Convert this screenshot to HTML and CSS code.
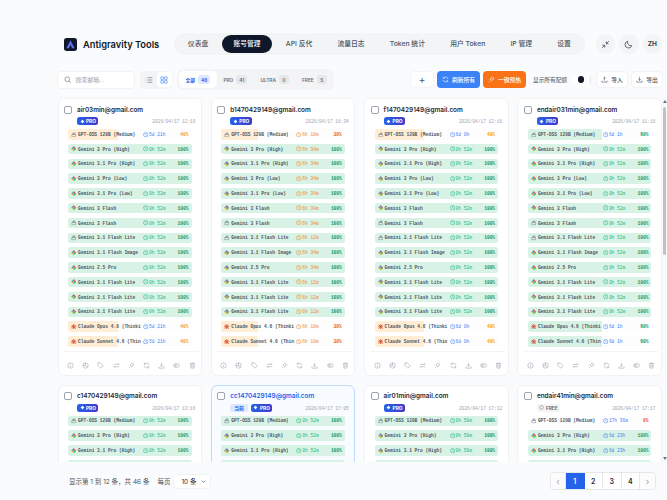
FILE: index.html
```html
<!DOCTYPE html>
<html lang="zh">
<head>
    <meta charset="UTF-8">
    <title>Antigravity Tools</title>
    <link rel="stylesheet" href="styles.css">
</head>
<body>
    <svg class="defs" aria-hidden="true">
        <symbol id="g" viewBox="0 0 10 10">
            <polygon points="5,0 5,5 0,5 2.8,2.8" fill="#2f7cf6"/>
            <polygon points="5,0 5,5 10,5 7.2,2.8" fill="#ef4444"/>
            <polygon points="10,5 5,5 5,10 7.2,7.2" fill="#22c55e"/>
            <polygon points="0,5 5,5 5,10 2.8,7.2" fill="#f5a90b"/>
        </symbol>
        <symbol id="o" viewBox="0 0 10 10">
            <path d="M1.5 4.5h7v4.2h-7zM3 4.5V3a1 1 0 0 1 2 0v1.5M5 4.5V2.2a1 1 0 0 1 2 0v2.3" fill="none" stroke="#6b7280" stroke-width=".9"/>
        </symbol>
        <symbol id="c" viewBox="0 0 10 10">
            <path d="M5 .8v8.4M.8 5h8.4M2 2l6 6M8 2l-6 6" stroke="#d9613f" stroke-width="1.8" stroke-linecap="round"/>
        </symbol>
        <symbol id="t" viewBox="0 0 10 10">
            <circle cx="5" cy="5" r="4" fill="none" stroke="currentColor" stroke-width="1"/>
            <path d="M5 2.8V5l1.6 1" fill="none" stroke="currentColor" stroke-width="1"/>
        </symbol>
        <symbol id="d" viewBox="0 0 10 10">
            <path d="M5 1l1.3 2.7L9 5 6.3 6.3 5 9 3.7 6.3 1 5l2.7-1.3z" fill="#fff"/>
            <circle cx="5" cy="5" r="2.4" fill="#fff"/>
        </symbol>
        <symbol id="a-info" viewBox="0 0 12 12"><circle cx="6" cy="6" r="4.6"/><path d="M6 5.5v3M6 3.4v.8"/></symbol>
        <symbol id="a-chart" viewBox="0 0 12 12"><circle cx="6" cy="6" r="4.6"/><path d="M6 1.4V6l3.4 3M6 6H1.4"/></symbol>
        <symbol id="a-tag" viewBox="0 0 12 12"><path d="M1.5 1.5h4.2l5 5-4.2 4.2-5-5z"/><path d="M3.8 3.8h.1"/></symbol>
        <symbol id="a-swap" viewBox="0 0 12 12"><path d="M1.5 4h9L8.5 2M10.5 8h-9l2 2"/></symbol>
        <symbol id="a-bolt" viewBox="0 0 12 12"><path d="M7 1.5l3.5 3-3 1-1 3-3-3.5zM3.5 8.5l-2 2M2 5.5l-.6.6M6.5 10l-.6.6"/></symbol>
        <symbol id="a-sync" viewBox="0 0 12 12"><path d="M10.3 5.5A4.4 4.4 0 0 0 2.4 3.6M1.7 6.5a4.4 4.4 0 0 0 7.9 1.9M2.2 1.5v2.4h2.4M9.8 10.5V8.1H7.4"/></symbol>
        <symbol id="a-down" viewBox="0 0 12 12"><path d="M6 1.5v6M3.8 5.4L6 7.6l2.2-2.2M1.5 8v2.5h9V8"/></symbol>
        <symbol id="a-eye" viewBox="0 0 12 12"><rect x="1.2" y="3" width="9.6" height="6" rx="3"/><circle cx="4.5" cy="6" r="1.6"/></symbol>
        <symbol id="a-trash" viewBox="0 0 12 12"><path d="M1.8 3h8.4M4.5 3V1.6h3V3M2.8 3l.5 7.4h5.4L9.2 3M5 5v3.4M7 5v3.4"/></symbol>
        <symbol id="a-up" viewBox="0 0 12 12"><path d="M6 8V2M3.8 4.2L6 2l2.2 2.2M1.5 8v2.5h9V8"/></symbol>
    </svg>

    <div class="page">
        <header class="header-bar">
            <div class="brand">
                <svg class="logo" viewBox="0 0 14 14">
                    <rect width="14" height="14" rx="3" fill="#0f172a"/>
                    <polygon points="7,2.5 11.5,11 8.8,11 7,7.6 5.2,11 2.5,11" fill="#5b6ee8"/>
                </svg>
                <span class="brand-name">Antigravity Tools</span>
            </div>
            <nav class="nav-pill">
                <a>仪表盘</a>
                <a class="active">账号管理</a>
                <a>API 反代</a>
                <a>流量日志</a>
                <a>Token 统计</a>
                <a>用户 Token</a>
                <a>IP 管理</a>
                <a>设置</a>
            </nav>
            <div class="circle-btn">
                <svg viewBox="0 0 12 12"><path d="M1.5 10.5L5 7M2 7h3v3M10.5 1.5L7 5M10 5H7V2"/></svg>
            </div>
            <div class="circle-btn">
                <svg viewBox="0 0 12 12"><path d="M5 1.6a4.6 4.6 0 1 0 5.4 5.8A4.4 4.4 0 0 1 5 1.6z"/></svg>
            </div>
            <div class="circle-btn lang">ZH</div>
        </header>

        <div class="toolbar">
            <div class="search">
                <svg viewBox="0 0 12 12"><circle cx="5.2" cy="5.2" r="3.8"/><path d="M8 8l3 3"/></svg>
                <span>搜索邮箱...</span>
            </div>
            <div class="view-toggle">
                <span class="view-btn">
                    <svg viewBox="0 0 12 12"><path d="M1 2.5h1M4 2.5h7M1 6h1M4 6h7M1 9.5h1M4 9.5h7"/></svg>
                </span>
                <span class="view-btn on">
                    <svg viewBox="0 0 12 12"><rect x="1.2" y="1.2" width="4" height="4" rx="1"/><rect x="6.8" y="1.2" width="4" height="4" rx="1"/><rect x="1.2" y="6.8" width="4" height="4" rx="1"/><rect x="6.8" y="6.8" width="4" height="4" rx="1"/></svg>
                </span>
            </div>
            <div class="filter-tabs">
                <span class="tab on">全部 <i>46</i></span>
                <span class="tab">PRO <i>41</i></span>
                <span class="tab">ULTRA <i>0</i></span>
                <span class="tab">FREE <i>5</i></span>
            </div>
            <div class="add-btn">+</div>
            <div class="act-btn blue">
                <svg viewBox="0 0 12 12"><use href="#a-sync"/></svg>刷新所有
            </div>
            <div class="act-btn orange">
                <svg viewBox="0 0 12 12"><use href="#a-bolt"/></svg>一键预热
            </div>
            <span class="quota-label">显示所有配额</span>
            <span class="switch"></span>
            <span class="tool-sep"></span>
            <div class="plain-btn">
                <svg viewBox="0 0 12 12"><use href="#a-up"/></svg>导入
            </div>
            <div class="plain-btn">
                <svg viewBox="0 0 12 12"><use href="#a-down"/></svg>导出
            </div>
        </div>

        <div class="list-wrap">
            <div class="card-grid">

                <div class="card">
                    <div class="card-head"><span class="check"></span><span class="email">air03min@gmail.com</span></div>
                    <div class="card-meta"><span class="badge pro"><svg><use href="#d"/></svg>PRO</span><time>2026/04/17 12:16</time></div>
                    <div class="q blue p40"><svg><use href="#o"/></svg><span>GPT-OSS 120B (Medium)</span><svg><use href="#t"/></svg><em>5d 21h</em><b>40%</b></div>
                    <div class="q"><svg><use href="#g"/></svg><span>Gemini 3 Pro (High)</span><svg><use href="#t"/></svg><em>0h 52m</em><b>100%</b></div>
                    <div class="q"><svg><use href="#g"/></svg><span>Gemini 3.1 Pro (High)</span><svg><use href="#t"/></svg><em>0h 52m</em><b>100%</b></div>
                    <div class="q"><svg><use href="#g"/></svg><span>Gemini 3 Pro (Low)</span><svg><use href="#t"/></svg><em>0h 52m</em><b>100%</b></div>
                    <div class="q"><svg><use href="#g"/></svg><span>Gemini 3.1 Pro (Low)</span><svg><use href="#t"/></svg><em>0h 52m</em><b>100%</b></div>
                    <div class="q"><svg><use href="#g"/></svg><span>Gemini 3 Flash</span><svg><use href="#t"/></svg><em>0h 52m</em><b>100%</b></div>
                    <div class="q"><svg><use href="#o"/></svg><span>Gemini 3 Flash</span><svg><use href="#t"/></svg><em>0h 52m</em><b>100%</b></div>
                    <div class="q"><svg><use href="#o"/></svg><span>Gemini 3.1 Flash Lite</span><svg><use href="#t"/></svg><em>0h 52m</em><b>100%</b></div>
                    <div class="q"><svg><use href="#g"/></svg><span>Gemini 3.1 Flash Image</span><svg><use href="#t"/></svg><em>0h 52m</em><b>100%</b></div>
                    <div class="q"><svg><use href="#g"/></svg><span>Gemini 2.5 Pro</span><svg><use href="#t"/></svg><em>0h 52m</em><b>100%</b></div>
                    <div class="q"><svg><use href="#g"/></svg><span>Gemini 3.1 Flash Lite</span><svg><use href="#t"/></svg><em>0h 52m</em><b>100%</b></div>
                    <div class="q"><svg><use href="#g"/></svg><span>Gemini 3.1 Flash Lite</span><svg><use href="#t"/></svg><em>0h 52m</em><b>100%</b></div>
                    <div class="q"><svg><use href="#g"/></svg><span>Gemini 3.1 Flash Lite</span><svg><use href="#t"/></svg><em>0h 52m</em><b>100%</b></div>
                    <div class="q blue p40"><svg><use href="#c"/></svg><span>Claude Opus 4.6 (Thinki</span><svg><use href="#t"/></svg><em>5d 21h</em><b>40%</b></div>
                    <div class="q blue p40"><svg><use href="#c"/></svg><span>Claude Sonnet 4.6 (Thin</span><svg><use href="#t"/></svg><em>5d 21h</em><b>40%</b></div>
                    <div class="card-actions"><svg><use href="#a-info"/></svg><svg><use href="#a-chart"/></svg><svg><use href="#a-tag"/></svg><svg><use href="#a-swap"/></svg><svg><use href="#a-bolt"/></svg><svg><use href="#a-sync"/></svg><svg><use href="#a-down"/></svg><svg><use href="#a-eye"/></svg><svg><use href="#a-trash"/></svg></div>
                </div>

                <div class="card">
                    <div class="card-head"><span class="check"></span><span class="email">b1470429149@gmail.com</span></div>
                    <div class="card-meta"><span class="badge pro"><svg><use href="#d"/></svg>PRO</span><time>2026/04/17 16:34</time></div>
                    <div class="q amber p30"><svg><use href="#o"/></svg><span>GPT-OSS 120B (Medium)</span><svg><use href="#t"/></svg><em>6h 10m</em><b>30%</b></div>
                    <div class="q amber full"><svg><use href="#g"/></svg><span>Gemini 3 Pro (High)</span><svg><use href="#t"/></svg><em>6h 34m</em><b>100%</b></div>
                    <div class="q amber full"><svg><use href="#g"/></svg><span>Gemini 3.1 Pro (High)</span><svg><use href="#t"/></svg><em>6h 34m</em><b>100%</b></div>
                    <div class="q amber full"><svg><use href="#g"/></svg><span>Gemini 3 Pro (Low)</span><svg><use href="#t"/></svg><em>6h 34m</em><b>100%</b></div>
                    <div class="q amber full"><svg><use href="#g"/></svg><span>Gemini 3.1 Pro (Low)</span><svg><use href="#t"/></svg><em>6h 34m</em><b>100%</b></div>
                    <div class="q amber full"><svg><use href="#g"/></svg><span>Gemini 3 Flash</span><svg><use href="#t"/></svg><em>6h 34m</em><b>100%</b></div>
                    <div class="q amber full"><svg><use href="#o"/></svg><span>Gemini 3 Flash</span><svg><use href="#t"/></svg><em>6h 34m</em><b>100%</b></div>
                    <div class="q amber full"><svg><use href="#o"/></svg><span>Gemini 3.1 Flash Lite</span><svg><use href="#t"/></svg><em>6h 12m</em><b>100%</b></div>
                    <div class="q amber full"><svg><use href="#g"/></svg><span>Gemini 3.1 Flash Image</span><svg><use href="#t"/></svg><em>6h 34m</em><b>100%</b></div>
                    <div class="q amber full"><svg><use href="#g"/></svg><span>Gemini 2.5 Pro</span><svg><use href="#t"/></svg><em>6h 34m</em><b>100%</b></div>
                    <div class="q amber full"><svg><use href="#g"/></svg><span>Gemini 3.1 Flash Lite</span><svg><use href="#t"/></svg><em>6h 12m</em><b>100%</b></div>
                    <div class="q amber full"><svg><use href="#g"/></svg><span>Gemini 3.1 Flash Lite</span><svg><use href="#t"/></svg><em>6h 12m</em><b>100%</b></div>
                    <div class="q amber full"><svg><use href="#g"/></svg><span>Gemini 3.1 Flash Lite</span><svg><use href="#t"/></svg><em>6h 12m</em><b>100%</b></div>
                    <div class="q amber p30"><svg><use href="#c"/></svg><span>Claude Opus 4.6 (Thinki</span><svg><use href="#t"/></svg><em>6h 10m</em><b>30%</b></div>
                    <div class="q amber p30"><svg><use href="#c"/></svg><span>Claude Sonnet 4.6 (Thin</span><svg><use href="#t"/></svg><em>6h 10m</em><b>30%</b></div>
                    <div class="card-actions"><svg><use href="#a-info"/></svg><svg><use href="#a-chart"/></svg><svg><use href="#a-tag"/></svg><svg><use href="#a-swap"/></svg><svg><use href="#a-bolt"/></svg><svg><use href="#a-sync"/></svg><svg><use href="#a-down"/></svg><svg><use href="#a-eye"/></svg><svg><use href="#a-trash"/></svg></div>
                </div>

                <div class="card">
                    <div class="card-head"><span class="check"></span><span class="email">f1470429149@gmail.com</span></div>
                    <div class="card-meta"><span class="badge pro"><svg><use href="#d"/></svg>PRO</span><time>2026/04/17 12:16</time></div>
                    <div class="q blue p40"><svg><use href="#o"/></svg><span>GPT-OSS 120B (Medium)</span><svg><use href="#t"/></svg><em>6d 0h</em><b>40%</b></div>
                    <div class="q"><svg><use href="#g"/></svg><span>Gemini 3 Pro (High)</span><svg><use href="#t"/></svg><em>0h 52m</em><b>100%</b></div>
                    <div class="q"><svg><use href="#g"/></svg><span>Gemini 3.1 Pro (High)</span><svg><use href="#t"/></svg><em>0h 52m</em><b>100%</b></div>
                    <div class="q"><svg><use href="#g"/></svg><span>Gemini 3 Pro (Low)</span><svg><use href="#t"/></svg><em>0h 52m</em><b>100%</b></div>
                    <div class="q"><svg><use href="#g"/></svg><span>Gemini 3.1 Pro (Low)</span><svg><use href="#t"/></svg><em>0h 52m</em><b>100%</b></div>
                    <div class="q"><svg><use href="#g"/></svg><span>Gemini 3 Flash</span><svg><use href="#t"/></svg><em>0h 52m</em><b>100%</b></div>
                    <div class="q"><svg><use href="#o"/></svg><span>Gemini 3 Flash</span><svg><use href="#t"/></svg><em>0h 52m</em><b>100%</b></div>
                    <div class="q"><svg><use href="#o"/></svg><span>Gemini 3.1 Flash Lite</span><svg><use href="#t"/></svg><em>0h 52m</em><b>100%</b></div>
                    <div class="q"><svg><use href="#g"/></svg><span>Gemini 3.1 Flash Image</span><svg><use href="#t"/></svg><em>0h 52m</em><b>100%</b></div>
                    <div class="q"><svg><use href="#g"/></svg><span>Gemini 2.5 Pro</span><svg><use href="#t"/></svg><em>0h 52m</em><b>100%</b></div>
                    <div class="q"><svg><use href="#g"/></svg><span>Gemini 3.1 Flash Lite</span><svg><use href="#t"/></svg><em>0h 52m</em><b>100%</b></div>
                    <div class="q"><svg><use href="#g"/></svg><span>Gemini 3.1 Flash Lite</span><svg><use href="#t"/></svg><em>0h 52m</em><b>100%</b></div>
                    <div class="q"><svg><use href="#g"/></svg><span>Gemini 3.1 Flash Lite</span><svg><use href="#t"/></svg><em>0h 52m</em><b>100%</b></div>
                    <div class="q blue p40"><svg><use href="#c"/></svg><span>Claude Opus 4.6 (Thinki</span><svg><use href="#t"/></svg><em>6d 0h</em><b>40%</b></div>
                    <div class="q blue p40"><svg><use href="#c"/></svg><span>Claude Sonnet 4.6 (Thin</span><svg><use href="#t"/></svg><em>6d 0h</em><b>40%</b></div>
                    <div class="card-actions"><svg><use href="#a-info"/></svg><svg><use href="#a-chart"/></svg><svg><use href="#a-tag"/></svg><svg><use href="#a-swap"/></svg><svg><use href="#a-bolt"/></svg><svg><use href="#a-sync"/></svg><svg><use href="#a-down"/></svg><svg><use href="#a-eye"/></svg><svg><use href="#a-trash"/></svg></div>
                </div>

                <div class="card">
                    <div class="card-head"><span class="check"></span><span class="email">endair031min@gmail.com</span></div>
                    <div class="card-meta"><span class="badge pro"><svg><use href="#d"/></svg>PRO</span><time>2026/04/17 11:16</time></div>
                    <div class="q blue p60"><svg><use href="#o"/></svg><span>GPT-OSS 120B (Medium)</span><svg><use href="#t"/></svg><em>6d 1h</em><b>60%</b></div>
                    <div class="q"><svg><use href="#g"/></svg><span>Gemini 3 Pro (High)</span><svg><use href="#t"/></svg><em>0h 52m</em><b>100%</b></div>
                    <div class="q"><svg><use href="#g"/></svg><span>Gemini 3.1 Pro (High)</span><svg><use href="#t"/></svg><em>0h 52m</em><b>100%</b></div>
                    <div class="q"><svg><use href="#g"/></svg><span>Gemini 3 Pro (Low)</span><svg><use href="#t"/></svg><em>0h 52m</em><b>100%</b></div>
                    <div class="q"><svg><use href="#g"/></svg><span>Gemini 3.1 Pro (Low)</span><svg><use href="#t"/></svg><em>0h 52m</em><b>100%</b></div>
                    <div class="q"><svg><use href="#g"/></svg><span>Gemini 3 Flash</span><svg><use href="#t"/></svg><em>0h 52m</em><b>100%</b></div>
                    <div class="q"><svg><use href="#o"/></svg><span>Gemini 3 Flash</span><svg><use href="#t"/></svg><em>0h 52m</em><b>100%</b></div>
                    <div class="q"><svg><use href="#o"/></svg><span>Gemini 3.1 Flash Lite</span><svg><use href="#t"/></svg><em>0h 52m</em><b>100%</b></div>
                    <div class="q"><svg><use href="#g"/></svg><span>Gemini 3.1 Flash Image</span><svg><use href="#t"/></svg><em>0h 52m</em><b>100%</b></div>
                    <div class="q"><svg><use href="#g"/></svg><span>Gemini 2.5 Pro</span><svg><use href="#t"/></svg><em>0h 52m</em><b>100%</b></div>
                    <div class="q"><svg><use href="#g"/></svg><span>Gemini 3.1 Flash Lite</span><svg><use href="#t"/></svg><em>0h 52m</em><b>100%</b></div>
                    <div class="q"><svg><use href="#g"/></svg><span>Gemini 3.1 Flash Lite</span><svg><use href="#t"/></svg><em>0h 52m</em><b>100%</b></div>
                    <div class="q"><svg><use href="#g"/></svg><span>Gemini 3.1 Flash Lite</span><svg><use href="#t"/></svg><em>0h 52m</em><b>100%</b></div>
                    <div class="q blue p60"><svg><use href="#c"/></svg><span>Claude Opus 4.6 (Thinki</span><svg><use href="#t"/></svg><em>6d 1h</em><b>60%</b></div>
                    <div class="q blue p60"><svg><use href="#c"/></svg><span>Claude Sonnet 4.6 (Thin</span><svg><use href="#t"/></svg><em>6d 1h</em><b>60%</b></div>
                    <div class="card-actions"><svg><use href="#a-info"/></svg><svg><use href="#a-chart"/></svg><svg><use href="#a-tag"/></svg><svg><use href="#a-swap"/></svg><svg><use href="#a-bolt"/></svg><svg><use href="#a-sync"/></svg><svg><use href="#a-down"/></svg><svg><use href="#a-eye"/></svg><svg><use href="#a-trash"/></svg></div>
                </div>

                <div class="card">
                    <div class="card-head"><span class="check"></span><span class="email">c1470429149@gmail.com</span></div>
                    <div class="card-meta"><span class="badge pro"><svg><use href="#d"/></svg>PRO</span><time>2026/04/17 13:16</time></div>
                    <div class="q"><svg><use href="#o"/></svg><span>GPT-OSS 120B (Medium)</span><svg><use href="#t"/></svg><em>0h 52m</em><b>100%</b></div>
                    <div class="q"><svg><use href="#g"/></svg><span>Gemini 3 Pro (High)</span><svg><use href="#t"/></svg><em>0h 52m</em><b>100%</b></div>
                    <div class="q"><svg><use href="#g"/></svg><span>Gemini 3.1 Pro (High)</span><svg><use href="#t"/></svg><em>0h 52m</em><b>100%</b></div>
                    <div class="q clip"></div>
                </div>

                <div class="card current">
                    <div class="card-head"><span class="check"></span><span class="email">cc1470429149@gmail.com</span></div>
                    <div class="card-meta"><span class="badge now">当前</span><span class="badge pro"><svg><use href="#d"/></svg>PRO</span><time>2026/04/17 17:05</time></div>
                    <div class="q"><svg><use href="#o"/></svg><span>GPT-OSS 120B (Medium)</span><svg><use href="#t"/></svg><em>0h 52m</em><b>100%</b></div>
                    <div class="q"><svg><use href="#g"/></svg><span>Gemini 3 Pro (High)</span><svg><use href="#t"/></svg><em>0h 52m</em><b>100%</b></div>
                    <div class="q"><svg><use href="#g"/></svg><span>Gemini 3.1 Pro (High)</span><svg><use href="#t"/></svg><em>0h 52m</em><b>100%</b></div>
                    <div class="q clip"></div>
                </div>

                <div class="card">
                    <div class="card-head"><span class="check"></span><span class="email">air01min@gmail.com</span></div>
                    <div class="card-meta"><span class="badge pro"><svg><use href="#d"/></svg>PRO</span><time>2026/04/17 17:12</time></div>
                    <div class="q"><svg><use href="#o"/></svg><span>GPT-OSS 120B (Medium)</span><svg><use href="#t"/></svg><em>0h 50m</em><b>100%</b></div>
                    <div class="q"><svg><use href="#g"/></svg><span>Gemini 3 Pro (High)</span><svg><use href="#t"/></svg><em>0h 50m</em><b>100%</b></div>
                    <div class="q"><svg><use href="#g"/></svg><span>Gemini 3.1 Pro (High)</span><svg><use href="#t"/></svg><em>0h 50m</em><b>100%</b></div>
                    <div class="q clip"></div>
                </div>

                <div class="card">
                    <div class="card-head"><span class="check"></span><span class="email">endair41min@gmail.com</span></div>
                    <div class="card-meta"><span class="badge free"><svg viewBox="0 0 10 10"><circle cx="5" cy="5" r="3.6" fill="none" stroke="#6b7280" stroke-width="1"/></svg>FREE</span><time>2026/04/17 17:17</time></div>
                    <div class="q empty"><svg><use href="#o"/></svg><span>GPT-OSS 120B (Medium)</span><svg><use href="#t"/></svg><em>17h 36m</em><b>0%</b></div>
                    <div class="q blue full"><svg><use href="#g"/></svg><span>Gemini 3 Pro (High)</span><svg><use href="#t"/></svg><em>6d 23h</em><b>100%</b></div>
                    <div class="q blue full"><svg><use href="#g"/></svg><span>Gemini 3.1 Pro (High)</span><svg><use href="#t"/></svg><em>6d 23h</em><b>100%</b></div>
                    <div class="q clip"></div>
                </div>

            </div>
            <div class="scrollbar">
                <span class="arrow-up"></span>
                <div class="thumb-track"><div class="thumb"></div></div>
                <span class="arrow-down"></span>
            </div>
        </div>

        <footer class="footer-bar">
            <span class="page-info">显示第 1 到 12 条，共 46 条</span>
            <span class="per-page">每页</span>
            <div class="size-select">10 条
                <svg viewBox="0 0 12 12"><path d="M3 4.5L6 7.5l3-3"/></svg>
            </div>
            <div class="pager">
                <span class="pg side">&#8249;</span>
                <span class="pg on">1</span>
                <span class="pg">2</span>
                <span class="pg">3</span>
                <span class="pg">4</span>
                <span class="pg side">&#8250;</span>
            </div>
        </footer>
    </div>
</body>
</html>
```

FILE: styles.css
```css
* {
    box-sizing: border-box;
}
html, body {
    height: 100%;
}
body {
    margin: 0;
    background: #fafbfc;
    color: #1f2937;
    font-family: Inter, "Noto Sans CJK SC", sans-serif;
    overflow: hidden;
}
.defs {
    display: none;
}
.page {
    width: 667px;
    height: 500px;
    padding: 33px 0 0 57px;
    display: flex;
    flex-direction: column;
    overflow: hidden;
}

/* header */
.header-bar {
    height: 22px;
    padding: 0 5px 0 7px;
    display: flex;
    align-items: center;
    gap: 4px;
}
.brand {
    display: flex;
    align-items: center;
    gap: 6px;
    margin-right: auto;
}
.logo {
    width: 13px;
    height: 13px;
}
.brand-name {
    font-size: 9.3px;
    font-weight: 600;
    color: #111827;
}
.nav-pill {
    display: flex;
    gap: 2px;
    height: 22px;
    padding: 2px;
    margin-right: 7px;
    background: #f3f4f6;
    border-radius: 11px;
}
.nav-pill a {
    padding: 0 11.6px;
    font-size: 6.8px;
    font-weight: 500;
    line-height: 18px;
    color: #4b5563;
    border-radius: 9px;
    white-space: nowrap;
}
.nav-pill a.active {
    background: #0f172a;
    color: #fff;
}
.circle-btn {
    width: 19.5px;
    height: 19.5px;
    border-radius: 50%;
    background: #f3f4f6;
    display: flex;
    align-items: center;
    justify-content: center;
}
.circle-btn svg {
    width: 9px;
    height: 9px;
    fill: none;
    stroke: #374151;
    stroke-width: 1;
}
.lang {
    font-size: 6.5px;
    font-weight: 700;
    color: #374151;
}

/* toolbar */
.toolbar {
    height: 21px;
    margin-top: 14px;
    display: flex;
    align-items: center;
    flex-shrink: 0;
    width: 640px;
}
.toolbar svg {
    fill: none;
    stroke: currentColor;
    stroke-width: 1;
}
.search {
    width: 78px;
    height: 18px;
    padding-left: 6px;
    display: flex;
    align-items: center;
    gap: 4px;
    background: #fff;
    border: 1px solid #f1f2f4;
    border-radius: 4px;
    font-size: 6px;
    color: #9ca3af;
    flex-shrink: 0;
}
.search svg {
    width: 7.5px;
    height: 7.5px;
    color: #6b7280;
}
.view-toggle {
    width: 33px;
    height: 18px;
    margin-left: 5px;
    padding: 1.5px;
    display: flex;
    background: #f3f4f6;
    border-radius: 5px;
    flex-shrink: 0;
}
.view-btn {
    flex: 1;
    display: flex;
    align-items: center;
    justify-content: center;
    border-radius: 4px;
    color: #6b7280;
}
.view-btn.on {
    background: #fff;
    color: #3b82f6;
}
.view-btn svg {
    width: 8px;
    height: 8px;
}
.filter-tabs {
    width: 157px;
    height: 21px;
    margin-left: 4px;
    padding: 2px;
    display: flex;
    background: #f3f4f6;
    border-radius: 6px;
    flex-shrink: 0;
}
.tab {
    padding: 0 6.5px;
    display: flex;
    align-items: center;
    gap: 3px;
    font-size: 4.8px;
    font-weight: 600;
    color: #6b7280;
    border-radius: 5px;
    white-space: nowrap;
}
.tab i {
    min-width: 10px;
    padding: 1.5px 3px;
    font-style: normal;
    text-align: center;
    background: #e5e7eb;
    border-radius: 3px;
}
.tab.on {
    background: #fff;
    color: #2563eb;
}
.tab.on i {
    background: #dbeafe;
}
.add-btn {
    width: 24px;
    height: 17px;
    margin-left: 76px;
    background: #fff;
    border: 1px solid #f3f4f6;
    border-radius: 4px;
    font-size: 10px;
    line-height: 14px;
    text-align: center;
    color: #4b5563;
    flex-shrink: 0;
}
.act-btn, .plain-btn {
    height: 17px;
    display: flex;
    align-items: center;
    justify-content: center;
    gap: 3px;
    font-size: 5.8px;
    font-weight: 500;
    border-radius: 4px;
    white-space: nowrap;
    flex-shrink: 0;
}
.act-btn {
    width: 43px;
    margin-left: 3px;
    color: #fff;
}
.act-btn.blue {
    background: #3b82f6;
}
.act-btn.orange {
    background: #f97316;
}
.act-btn svg, .plain-btn svg {
    width: 7px;
    height: 7px;
}
.quota-label {
    margin-left: 7px;
    font-size: 5.7px;
    color: #4b5563;
    white-space: nowrap;
}
.switch {
    width: 13px;
    height: 8px;
    margin-left: 5px;
    background: #fff;
    border-radius: 4px;
    display: flex;
    justify-content: flex-end;
    flex-shrink: 0;
}
.switch::after {
    content: "";
    width: 6.5px;
    height: 6.5px;
    margin: .7px;
    background: #0f172a;
    border-radius: 50%;
}
.tool-sep {
    width: 1px;
    height: 8px;
    margin: 0 5px 0 5px;
    background: #e5e7eb;
    flex-shrink: 0;
}
.plain-btn {
    width: 32px;
    margin-right: 3px;
    background: #fff;
    border: 1px solid #f1f2f4;
    color: #4b5563;
}

/* card list */
.list-wrap {
    height: 364px;
    margin-top: 8px;
    display: flex;
    overflow: hidden;
    flex-shrink: 0;
}
.card-grid {
    width: 605px;
    padding-left: .5px;
    display: grid;
    grid-template-columns: repeat(4, 144.5px);
    column-gap: 8.8px;
    row-gap: 9px;
    align-content: start;
    overflow: hidden;
}
.card {
    height: 277.5px;
    padding: 6px 9.5px 0 9.5px;
    background: #fff;
    border: 1px solid #f1f2f4;
    border-radius: 6px;
}
.card.current {
    background: #f8fbff;
    border-color: #bfdbfe;
}
.card.current .email {
    color: #2563eb;
}
.card-head {
    height: 9px;
    margin-left: -4px;
    display: flex;
    align-items: center;
    gap: 5px;
}
.check {
    width: 8px;
    height: 8px;
    background: #fff;
    border: 1px solid #9ca3af;
    border-radius: 2px;
    flex-shrink: 0;
}
.email {
    font-size: 6.4px;
    font-weight: 600;
    color: #1f2937;
    white-space: nowrap;
}
.card-meta {
    height: 8px;
    margin: 3px -4px 4px 9px;
    display: flex;
    align-items: center;
    gap: 3px;
}
.card-meta time {
    margin-left: auto;
    margin-top: 1px;
    font-family: "Liberation Mono", monospace;
    font-size: 4.5px;
    color: #9ca3af;
}
.badge {
    height: 8px;
    padding: 0 2.5px;
    display: flex;
    align-items: center;
    gap: 1.5px;
    font-size: 4.8px;
    font-weight: 700;
    border-radius: 2.5px;
}
.badge svg {
    width: 5px;
    height: 5px;
}
.badge.pro {
    background: linear-gradient(90deg, #2563eb, #4338ca);
    color: #fff;
}
.badge.now {
    background: #dbeafe;
    color: #2563eb;
    padding: 0 4px;
}
.badge.free {
    background: #f3f4f6;
    color: #6b7280;
}

/* quota rows */
.q {
    height: 10.5px;
    margin-bottom: 4.3px;
    padding: 0 3px;
    display: grid;
    grid-template-columns: 5px 63px 5px 1fr auto;
    align-items: center;
    column-gap: 2px;
    background: #d9f2e6;
    border-radius: 2.5px;
    font-family: "Liberation Mono", monospace;
    font-size: 4.55px;
    font-weight: 700;
    color: #10b981;
}
.q svg {
    width: 5.5px;
    height: 5.5px;
}
.q span {
    color: #4b5563;
    white-space: nowrap;
}
.q em {
    margin-left: -1px;
    font-style: normal;
    font-weight: 400;
    white-space: nowrap;
}
.q b {
    color: #059669;
}
.q.blue {
    color: #3b82f6;
}
.q.amber {
    color: #ea8a2e;
}
.q.p30 b, .q.p40 b {
    color: #f59e0b;
}
.q.p30 {
    background: linear-gradient(90deg, #ffedd5 30%, #fdfdfd 30%);
}
.q.p30 b {
    color: #ea580c;
}
.q.p40 {
    background: linear-gradient(90deg, #ffedd5 40%, #fdfdfd 40%);
}
.q.p60 {
    background: linear-gradient(90deg, #d9f2e6 60%, #fdfdfd 60%);
}
.q.empty {
    background: #fdfdfd;
    color: #3b82f6;
}
.q.empty b {
    color: #ef4444;
}
.q.full b {
    color: #059669;
}
.card-actions {
    height: 25px;
    margin: 0 -7px 0 -4px;
    padding: 4px 3px 0;
    display: flex;
    align-items: center;
    justify-content: space-between;
    border-top: 1px solid #f3f4f6;
}
.card-actions svg {
    width: 7px;
    height: 7px;
    fill: none;
    stroke: #9ca3af;
    stroke-width: 1;
}

/* fake scrollbar column */
.scrollbar {
    width: 5px;
    margin-left: .5px;
    display: flex;
    flex-direction: column;
    align-items: center;
}
.arrow-up, .arrow-down {
    width: 0;
    height: 0;
    border-left: 2px solid transparent;
    border-right: 2px solid transparent;
    margin: 2px 0;
}
.arrow-up {
    border-bottom: 3px solid #6b7280;
}
.arrow-down {
    border-top: 3px solid #6b7280;
}
.thumb-track {
    flex: 1;
    width: 100%;
    padding-top: 2px;
}
.thumb {
    width: 3.5px;
    height: 148px;
    margin: 0 auto;
    background: #c1c1c1;
    border-radius: 2px;
}

/* footer */
.footer-bar {
    height: 38px;
    padding: 0 11px 0 12px;
    display: flex;
    align-items: center;
    font-size: 6.5px;
    color: #4b5563;
}
.per-page {
    margin-left: 8px;
}
.size-select {
    width: 38px;
    height: 15px;
    margin-left: 3px;
    padding: 0 3px 0 7px;
    display: flex;
    align-items: center;
    justify-content: space-between;
    background: #fff;
    border: 1px solid #f1f2f4;
    border-radius: 4px;
    color: #1f2937;
}
.size-select svg {
    width: 7px;
    height: 7px;
    fill: none;
    stroke: #4b5563;
    stroke-width: 1.2;
}
.pager {
    margin-left: auto;
    height: 18px;
    display: flex;
    background: #fff;
    border: 1px solid #e5e7eb;
    border-radius: 4px;
    overflow: hidden;
}
.pg {
    width: 18.5px;
    display: flex;
    align-items: center;
    justify-content: center;
    font-size: 7px;
    font-weight: 600;
    color: #1f2937;
    border-right: 1px solid #e5e7eb;
}
.pg:last-child {
    border-right: 0;
}
.pg.side {
    width: 15px;
    font-size: 9px;
    font-weight: 400;
    color: #9ca3af;
    background: #fcfcfd;
}
.pg.on {
    background: #2563eb;
    color: #fff;
    border-right-color: #2563eb;
}
```
